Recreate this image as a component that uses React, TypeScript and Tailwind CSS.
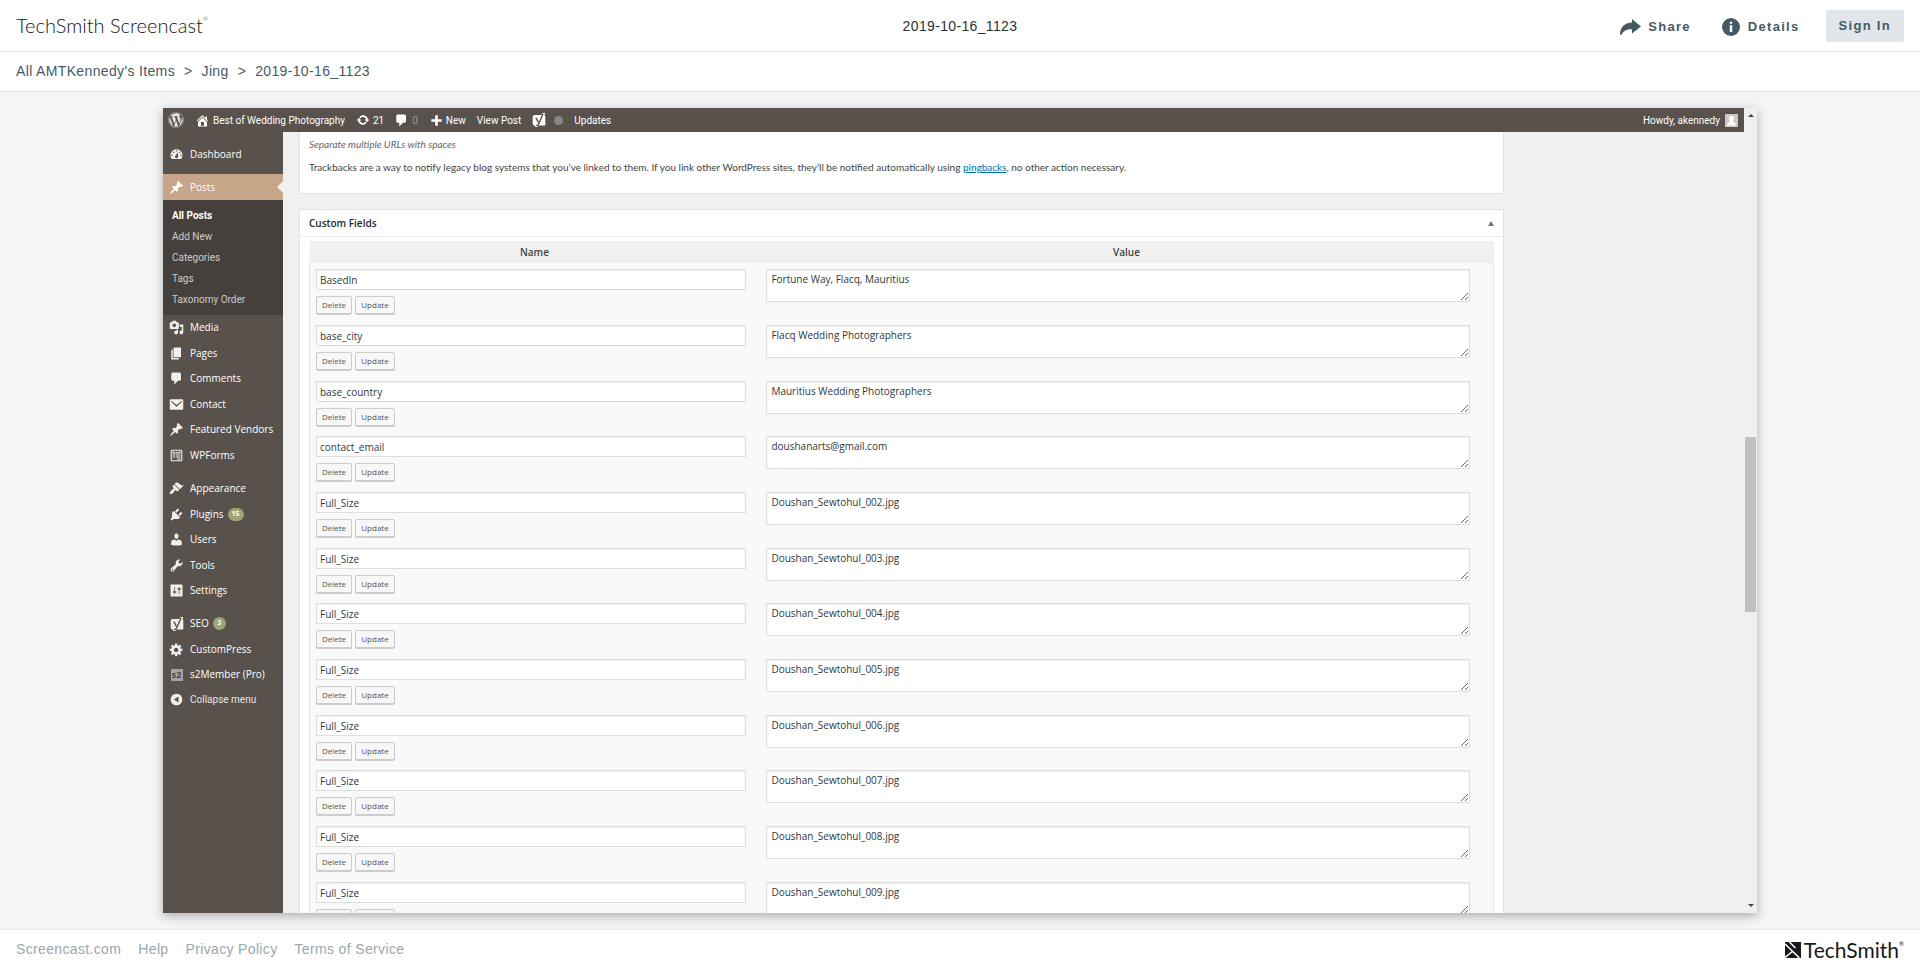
import type { ReactNode } from "react";
import { FaWordpress } from "react-icons/fa";

const icons = {
  dashboard:
    "M3.76 16h12.48c1.1-1.37 1.76-3.11 1.76-5 0-4.42-3.58-8-8-8s-8 3.58-8 8c0 1.89.66 3.63 1.76 5zM10 4c.55 0 1 .45 1 1s-.45 1-1 1-1-.45-1-1 .45-1 1-1zM6 6c.55 0 1 .45 1 1s-.45 1-1 1-1-.45-1-1 .45-1 1-1zm8 0c.55 0 1 .45 1 1s-.45 1-1 1-1-.45-1-1 .45-1 1-1zm-5.37 5.55L12 7v6c0 1.1-.9 2-2 2s-2-.9-2-2c0-.57.24-1.08.63-1.45zM4 10c.55 0 1 .45 1 1s-.45 1-1 1-1-.45-1-1 .45-1 1-1zm12 0c.55 0 1 .45 1 1s-.45 1-1 1-1-.45-1-1 .45-1 1-1z",
  pin: "M10.44 3.02l1.82-1.82 6.36 6.35-1.83 1.82c-1.05-.68-2.48-.57-3.41.36l-.75.75c-.92.93-1.04 2.35-.35 3.41l-1.83 1.82-2.41-2.41-2.8 2.79c-.42.42-3.38 2.71-3.8 2.29s1.86-3.39 2.28-3.81l2.79-2.79L4.1 9.36l1.83-1.82c1.05.69 2.48.57 3.4-.36l.75-.75c.93-.92 1.05-2.35.36-3.41z",
  media:
    "M13 11V4c0-.55-.45-1-1-1h-1.67L9 1H5L3.67 3H2c-.55 0-1 .45-1 1v7c0 .55.45 1 1 1h10c.55 0 1-.45 1-1zM7 4.5c1.38 0 2.5 1.12 2.5 2.5S8.38 9.5 7 9.5 4.5 8.38 4.5 7 5.62 4.5 7 4.5zM14 6h5v10.5c0 1.38-1.12 2.5-2.5 2.5S14 17.88 14 16.5s1.12-2.5 2.5-2.5c.17 0 .34.02.5.05V9h-3V6zm-4 8.05V13h2v3.5c0 1.38-1.12 2.5-2.5 2.5S7 17.88 7 16.5 8.12 14 9.5 14c.17 0 .34.02.5.05z",
  page: "M6 15V2h10v13H6zm-1 1h8v2H3V5h2v11z",
  comment: "M5 2h9c1.1 0 2 .9 2 2v7c0 1.1-.9 2-2 2h-2l-5 5v-5H5c-1.1 0-2-.9-2-2V4c0-1.1.9-2 2-2z",
  mail: "M2.5 3h15c.8 0 1.5.7 1.5 1.5v11c0 .8-.7 1.5-1.5 1.5h-15c-.8 0-1.500-.7-1.500-1.500v-11C1 3.700 1.700 3 2.500 3zM3 5v1.600l7 6.400 7-6.400V5l-7 5.500z",
  form: "M3 1h14c1.100 0 2 .9 2 2v14c0 1.100-.9 2-2 2H3c-1.100 0-2-.9-2-2V3c0-1.100.9-2 2-2zM2.700 2.700v14.600h14.600V2.700zM4 4l2 0 2 2 2-2 2 2 2-2h2v3H4zM4 8.500h4V10H4zm5 0h7V10H9zM4 11.500h4V13H4zm5 0h7V13H9zM11 14.500h5V16h-5z",
  brush:
    "M14.48 11.06L7.41 3.99l1.5-1.5c.5-.56 2.3-.47 3.51.32 1.21.8 1.43 1.28 2.91 2.1 1.18.64 2.45 1.26 4.45.85zm-.71.71L6.7 4.7 4.93 6.47c-.39.39-.39 1.02 0 1.41l1.06 1.06c.39.39.39 1.03 0 1.42-.6.6-1.43 1.11-2.21 1.69-.35.26-.7.53-1.01.84C1.43 14.23.4 16.08 1.4 17.07c.99 1 2.84-.03 4.18-1.36.31-.31.58-.66.85-1.02.57-.78 1.08-1.61 1.69-2.21.39-.39 1.02-.39 1.41 0l1.06 1.06c.39.39 1.02.39 1.41 0z",
  plug: "M13.11 4.36L9.87 7.6 8 5.73l3.24-3.24c.35-.34 1.05-.2 1.56.32.52.51.66 1.21.31 1.55zm-8 1.77l.91-1.12 9.01 9.01-1.19.84c-.71.71-2.63 1.16-3.82 1.16H6.14L4.9 17.26c-.59.59-1.54.59-2.12 0-.59-.58-.59-1.53 0-2.12l1.24-1.24v-3.88c0-1.13.4-3.19 1.09-3.89zm7.26 3.97l3.24-3.24c.34-.35 1.04-.21 1.55.31.52.51.66 1.21.31 1.55l-3.24 3.25z",
  user: "M10 9.25c-2.27 0-2.73-3.44-2.73-3.44C7 4.02 7.82 2 9.97 2c2.16 0 2.98 2.02 2.71 3.81 0 0-.41 3.44-2.68 3.44zm0 2.57L12.72 10c2.39 0 4.52 2.33 4.52 4.53v2.49s-3.65 1.13-7.24 1.13c-3.65 0-7.24-1.13-7.24-1.13v-2.49c0-2.25 1.94-4.48 4.47-4.48z",
  wrench:
    "M16.68 9.77c-1.34 1.34-3.3 1.67-4.95.99l-5.41 6.52c-.99.99-2.59.99-3.58 0s-.99-2.59 0-3.57l6.52-5.42c-.68-1.65-.35-3.61.99-4.95 1.28-1.28 3.12-1.62 4.72-1.06l-2.89 2.89 2.82 2.82 2.86-2.87c.53 1.58.18 3.39-1.08 4.65zM3.81 16.21c.4.39 1.04.39 1.43 0 .4-.4.4-1.04 0-1.43-.39-.4-1.03-.4-1.43 0-.39.39-.39 1.03 0 1.43z",
  sliders:
    "M18 17V3c0-.55-.45-1-1-1H3c-.55 0-1 .45-1 1v14c0 .55.45 1 1 1h14c.55 0 1-.45 1-1zM8 11h1c.55 0 1 .45 1 1s-.45 1-1 1H8v1.500c0 .28-.22.5-.5.5s-.5-.22-.5-.5V13H6c-.55 0-1-.45-1-1s.45-1 1-1h1V5.500c0-.28.22-.5.5-.5s.5.22.5.5V11zm5-2h-1c-.55 0-1-.45-1-1s.45-1 1-1h1V5.500c0-.28.22-.5.5-.5s.5.22.5.5V7h1c.55 0 1 .45 1 1s-.45 1-1 1h-1v5.500c0 .28-.22.5-.5.5s-.5-.22-.5-.5V9z",
  gear: "M18 12h-2.180c-.17.7-.44 1.350-.81 1.930l1.540 1.540-2.100 2.100-1.540-1.540c-.58.36-1.230.63-1.910.79V19H8v-2.180c-.68-.16-1.330-.43-1.910-.79l-1.540 1.540-2.120-2.120 1.540-1.540c-.36-.58-.63-1.230-.79-1.910H1V9.030h2.170c.16-.7.44-1.350.8-1.940L2.430 5.550l2.100-2.100 1.540 1.540c.58-.37 1.240-.64 1.930-.81V2h3v2.180c.68.16 1.330.43 1.910.79l1.540-1.540 2.120 2.120-1.540 1.540c.36.59.64 1.240.8 1.940H18V12zm-8.500 1.500c1.660 0 3-1.340 3-3s-1.340-3-3-3-3 1.340-3 3 1.340 3 3 3z",
  collapse: "M10 1a9 9 0 1 1 0 18 9 9 0 0 1 0-18zM13 5.500L6 10l7 4.500z",
  home: "M16 8.500l1.530 1.530-1.060 1.060L10 4.600l-6.470 6.490-1.060-1.060L10 2.500l4 4v-2h2v4zm-6-2.460l6 5.990V18H4v-5.970zM12 17v-5H8v5h4z",
  refresh:
    "M10.2 3.28c3.53 0 6.43 2.61 6.92 6h2.08l-3.5 4-3.5-4h2.32c-.45-1.97-2.21-3.45-4.32-3.45-1.45 0-2.73.71-3.54 1.78L4.95 5.66C6.23 4.2 8.11 3.28 10.2 3.28zm-.4 13.44c-3.52 0-6.43-2.61-6.92-6H.8l3.5-4c1.17 1.33 2.33 2.67 3.5 4H5.48c.45 1.97 2.21 3.45 4.32 3.45 1.45 0 2.73-.71 3.54-1.78l1.71 1.95c-1.28 1.46-3.15 2.38-5.25 2.38z",
  plus: "M8 2h4v6h6v4h-6v6H8v-6H2V8h6z",
};

type IconName = keyof typeof icons;

function Icon({ name, className = "size-[15px]" }: { name: IconName; className?: string }) {
  return (
    <svg viewBox="0 0 20 20" fill="currentColor" fillRule="evenodd" aria-hidden="true" className={`shrink-0 ${className}`}>
      <path d={icons[name]} />
    </svg>
  );
}

function YoastIcon() {
  return (
    <svg viewBox="0 0 20 20" aria-hidden="true" className="size-[14px] shrink-0">
      <path fill="currentColor" d="M4 3h9.500L14.700 0h4.300l-1.200 3.200c.9.400 1.200 1 1.200 1.800v13H9l-1.200 2H4.500v-2H4c-1.700 0-3-1.300-3-3V6c0-1.700 1.300-3 3-3z" />
      <path fill="none" stroke="#59524c" strokeWidth="2" d="M5.500 6.500l3.700 7M15.800 1l-6 14.500c-.7 1.600-1.500 2.500-3.800 2.600" />
    </svg>
  );
}

function MemberIcon() {
  return (
    <span aria-hidden="true" className="flex size-3 items-center justify-center bg-[#a5a3a1] text-[9px] leading-none font-bold text-[#4b4641]">
      s2
    </span>
  );
}

type MenuEntry = { label: string; icon: ReactNode; count?: number };

const contentMenu: MenuEntry[] = [
  { label: "Media", icon: <Icon name="media" /> },
  { label: "Pages", icon: <Icon name="page" /> },
  { label: "Comments", icon: <Icon name="comment" /> },
  { label: "Contact", icon: <Icon name="mail" /> },
  { label: "Featured Vendors", icon: <Icon name="pin" /> },
  { label: "WPForms", icon: <Icon name="form" className="size-[13px]" /> },
];

const siteMenu: MenuEntry[] = [
  { label: "Appearance", icon: <Icon name="brush" /> },
  { label: "Plugins", icon: <Icon name="plug" />, count: 15 },
  { label: "Users", icon: <Icon name="user" /> },
  { label: "Tools", icon: <Icon name="wrench" /> },
  { label: "Settings", icon: <Icon name="sliders" /> },
];

const extraMenu: MenuEntry[] = [
  { label: "SEO", icon: <YoastIcon />, count: 3 },
  { label: "CustomPress", icon: <Icon name="gear" /> },
  { label: "s2Member (Pro)", icon: <MemberIcon /> },
];

const postLinks = ["Add New", "Categories", "Tags", "Taxonomy Order"];

const fields = [
  { name: "BasedIn", value: "Fortune Way, Flacq, Mauritius" },
  { name: "base_city", value: "Flacq Wedding Photographers" },
  { name: "base_country", value: "Mauritius Wedding Photographers" },
  { name: "contact_email", value: "doushanarts@gmail.com" },
  { name: "Full_Size", value: "Doushan_Sewtohul_002.jpg" },
  { name: "Full_Size", value: "Doushan_Sewtohul_003.jpg" },
  { name: "Full_Size", value: "Doushan_Sewtohul_004.jpg" },
  { name: "Full_Size", value: "Doushan_Sewtohul_005.jpg" },
  { name: "Full_Size", value: "Doushan_Sewtohul_006.jpg" },
  { name: "Full_Size", value: "Doushan_Sewtohul_007.jpg" },
  { name: "Full_Size", value: "Doushan_Sewtohul_008.jpg" },
  { name: "Full_Size", value: "Doushan_Sewtohul_009.jpg" },
];

function MenuGroup({ entries, children }: { entries: MenuEntry[]; children?: ReactNode }) {
  return (
    <ul className="mb-2">
      {entries.map((entry) => (
        <li key={entry.label} className="h-[25px] even:h-[26px]">
          <a href="#" className="flex h-full items-center whitespace-nowrap">
            <span className="flex w-[27px] shrink-0 justify-center text-[#f1efee]">{entry.icon}</span>
            {entry.label}
            {entry.count !== undefined && (
              <span className="ml-1 flex h-[13px] min-w-[13px] items-center justify-center rounded-full bg-[#9ea476] px-1 text-[7px] font-bold">
                {entry.count}
              </span>
            )}
          </a>
        </li>
      ))}
      {children}
    </ul>
  );
}

function Sidebar() {
  return (
    <nav aria-label="Admin menu" className="w-[120px] shrink-0 bg-[#59524c] pt-[10px] text-[10px] text-white">
      <a href="#" className="flex h-6 items-center">
        <span className="flex w-[27px] justify-center text-[#f1efee]">
          <Icon name="dashboard" />
        </span>
        Dashboard
      </a>
      <a href="#" className="relative mt-2 flex h-[26px] items-center bg-[#c7a589]">
        <span className="flex w-[27px] justify-center">
          <Icon name="pin" />
        </span>
        Posts
        <svg viewBox="0 0 6 12" aria-hidden="true" className="absolute top-[7px] right-0 h-3 w-[6px] text-[#f0f0f0]">
          <path d="M6 0v12L0 6z" fill="currentColor" />
        </svg>
      </a>
      <ul className="bg-[#46403c] pt-[5px] pb-[5px] pl-[9px] font-[Roboto,sans-serif] text-[#cdcbc9]">
        <li className="flex h-[21px] items-center font-bold text-white">
          <a href="#">All Posts</a>
        </li>
        {postLinks.map((label) => (
          <li key={label} className="flex h-[21px] items-center">
            <a href="#">{label}</a>
          </li>
        ))}
      </ul>
      <MenuGroup entries={contentMenu} />
      <MenuGroup entries={siteMenu} />
      <MenuGroup entries={extraMenu}>
        <li>
          <button type="button" className="flex h-[25px] items-center font-[Roboto,sans-serif] text-[#e6e4e2]">
            <span className="flex w-[27px] justify-center text-[#f1efee]">
              <Icon name="collapse" className="size-[13px]" />
            </span>
            Collapse menu
          </button>
        </li>
      </MenuGroup>
    </nav>
  );
}

function AdminBar() {
  return (
    <div className="flex h-6 shrink-0 items-center bg-[#59524c] pr-[6px] pl-[5px] font-[Roboto,sans-serif] text-[10px] whitespace-nowrap text-white">
      <a href="#" aria-label="About WordPress">
        <FaWordpress className="size-4 text-[#e8e6e4]" />
      </a>
      <a href="#" className="ml-[11px] flex items-center gap-[3px]">
        <Icon name="home" />
        Best of Wedding Photography
      </a>
      <a href="#" className="ml-[11px] flex items-center gap-[3px]">
        <Icon name="refresh" className="size-[14px]" />
        21
      </a>
      <a href="#" className="ml-[10px] flex items-center gap-[3px] text-[#a09b97]">
        <Icon name="comment" className="size-[15px] text-white" />
        0
      </a>
      <a href="#" className="ml-3 flex items-center gap-[3px]">
        <Icon name="plus" className="size-[13px]" />
        New
      </a>
      <a href="#" className="ml-[11px]">
        View Post
      </a>
      <a href="#" aria-label="SEO" className="ml-[11px] flex items-center gap-2">
        <YoastIcon />
        <span className="size-[9px] rounded-full bg-[#888888]" />
      </a>
      <a href="#" className="ml-[11px]">
        Updates
      </a>
      <a href="#" className="ml-auto flex items-center gap-[5px]">
        Howdy, akennedy
        <svg viewBox="0 0 13 13" aria-hidden="true" className="size-[13px]">
          <path fill="#c9c9c9" d="M0 0h13v13H0z" />
          <path fill="#fff" d="M6.500 1.800c1.700 0 2.700 1.300 2.500 3-.1 1.200-.6 2-1.100 2.500.1.800 2.900 1.200 3.200 4.200H1.900c.3-3 3.100-3.400 3.200-4.200-.5-.5-1-1.300-1.100-2.500-.2-1.700.8-3 2.500-3z" />
        </svg>
      </a>
    </div>
  );
}

function FieldRow({ name, value, index }: { name: string; value: string; index: number }) {
  return (
    <tr className="h-14 align-top nth-[3n]:h-[55px]">
      <td className="pt-[6px] pr-[13px] pl-[6px]">
        <input
          aria-label={`Name ${index + 1}`}
          defaultValue={name}
          className="block h-[21px] w-full border border-[#dddddd] bg-white px-[3px] text-[10px] text-[#32373c] shadow-[inset_0_1px_2px_rgba(0,0,0,0.07)]"
        />
        <div className="mt-[6px] flex gap-[3px]">
          <button type="button" className="h-[18px] w-9 rounded-[2px] border border-[#cccccc] bg-[#f7f7f7] text-[8px] leading-none text-[#555555] shadow-[0_1px_0_#cccccc]">
            Delete
          </button>
          <button type="button" className="h-[18px] w-10 rounded-[2px] border border-[#cccccc] bg-[#f7f7f7] text-[8px] leading-none text-[#555555] shadow-[0_1px_0_#cccccc]">
            Update
          </button>
        </div>
      </td>
      <td className="pt-[6px] pr-[23px] pl-[7px]">
        <textarea
          aria-label={`Value ${index + 1}`}
          defaultValue={value}
          className="block h-[33px] w-full resize-y overflow-hidden border border-[#dddddd] bg-white px-1 py-[2px] text-[10px] leading-[14px] text-[#32373c] shadow-[inset_0_1px_2px_rgba(0,0,0,0.07)]"
        />
      </td>
    </tr>
  );
}

function Editor() {
  return (
    <div className="min-w-0 flex-1 overflow-hidden pr-[240px] pl-4 text-[10px] text-[#444444]">
      <section className="border border-t-0 border-[#e2e2e2] bg-white px-[9px] pt-[5px] pb-[18px] font-[Lato,sans-serif]">
        <p className="leading-[15px] text-[#666666] italic">Separate multiple URLs with spaces</p>
        <p className="mt-2 leading-[15px]">
          Trackbacks are a way to notify legacy blog systems that you&rsquo;ve linked to them. If you link other WordPress
          sites, they&rsquo;ll be notified automatically using{" "}
          <a href="#" className="text-[#0073aa] underline">
            pingbacks
          </a>
          , no other action necessary.
        </p>
      </section>
      <section className="mt-[15px] border border-[#e2e2e2] bg-white">
        <header className="flex h-[27px] items-center justify-between border-b border-[#eeeeee] px-[9px]">
          <h2 className="font-semibold text-[#23282d]">Custom Fields</h2>
          <button type="button" aria-label="Toggle panel">
            <svg viewBox="0 0 6 5" aria-hidden="true" className="h-[5px] w-[6px]">
              <path d="M3 0l3 5H0z" fill="#72777c" />
            </svg>
          </button>
        </header>
        <div className="px-[9px] pt-1">
          <table className="w-full table-fixed border-collapse bg-[#f9f9f9]">
            <thead>
              <tr className="h-[22px] bg-[#f0f0f0] leading-none">
                <th className="w-[38%] font-semibold">Name</th>
                <th className="font-semibold">Value</th>
              </tr>
            </thead>
            <tbody className="border-x border-[#e4e4e4]">
              {fields.map((field, index) => (
                <FieldRow key={field.value} index={index} {...field} />
              ))}
            </tbody>
          </table>
        </div>
      </section>
    </div>
  );
}

function ScrollTrack() {
  return (
    <div aria-hidden="true" className="flex w-[13px] shrink-0 flex-col items-center bg-[#f0f0f0] py-[6px]">
      <svg viewBox="0 0 6 3" className="h-[3px] w-[6px]">
        <path d="M3 0l3 3H0z" fill="#444" />
      </svg>
      <div className="grow-[320]" />
      <div className="h-[175px] w-[11px] bg-[#c1c1c1]" />
      <div className="grow-[292]" />
      <svg viewBox="0 0 6 3" className="h-[3px] w-[6px]">
        <path d="M3 3l3-3H0z" fill="#444" />
      </svg>
    </div>
  );
}

export default function App() {
  return (
    <div className="flex h-screen flex-col overflow-hidden bg-white font-['Liberation_Sans',Arial,sans-serif] text-[14px] text-[#455a64]">
      <header className="grid h-[52px] shrink-0 grid-cols-[1fr_auto_1fr] items-center border-b border-[#e2e6eb] px-4 pt-[2px]">
        <a href="#" className="flex items-start pb-1 font-[Lato,sans-serif] text-[20px] leading-6 font-light text-[#111719]">
          TechSmith Screencast
          <span className="text-[6px] leading-3">&reg;</span>
        </a>
        <h1 className="tracking-wide text-[#2a3236]">2019-10-16_1123</h1>
        <div className="flex items-center justify-end text-[13px] font-bold tracking-widest">
          <button type="button" className="flex items-center gap-[7px]">
            <svg viewBox="0 0 21 16" fill="currentColor" aria-hidden="true" className="h-4 w-[21px]">
              <path d="M12 0l9 7.500-9 7v-4.200C7.500 10 4 11.200 1.200 15.900c-.8.100-1.200-.3-1.200-1C.3 8.500 4.500 3.900 12 3.600z" />
            </svg>
            Share
          </button>
          <button type="button" className="ml-[31px] flex items-center gap-2">
            <svg viewBox="0 0 18 18" aria-hidden="true" className="size-[18px]">
              <circle cx="9" cy="9" r="9" fill="currentColor" />
              <path fill="#fff" d="M7.800 3.800h2.400v2H7.800zM7.800 7.200h2.400V14H7.800z" />
            </svg>
            Details
          </button>
          <a href="#" className="mb-[1px] ml-[26px] flex h-8 items-center rounded-[2px] bg-[#e2e6eb] px-[13px]">
            Sign In
          </a>
        </div>
      </header>
      <nav aria-label="Breadcrumb" className="flex h-10 shrink-0 items-center gap-[9px] border-b border-[#e2e6eb] px-4 tracking-wide">
        <a href="#">All AMTKennedy's Items</a>
        <span>&gt;</span>
        <a href="#">Jing</a>
        <span>&gt;</span>
        <a href="#">2019-10-16_1123</a>
      </nav>
      <main className="flex min-h-0 flex-1 justify-center bg-[#f4f5f7] p-4">
        <div className="flex w-full max-w-[1594px] overflow-hidden bg-[#f0f0f0] font-['Open_Sans',sans-serif] shadow-[0_3px_10px_rgba(0,0,0,0.3)]">
          <div className="flex min-w-0 flex-1 flex-col">
            <AdminBar />
            <div className="flex min-h-0 flex-1">
              <Sidebar />
              <Editor />
            </div>
          </div>
          <ScrollTrack />
        </div>
      </main>
      <footer className="flex h-10 shrink-0 items-center justify-between border-t border-[#e2eaf0] px-4 tracking-wide text-[#9aa7ad]">
        <nav aria-label="Footer" className="flex gap-[17px]">
          <a href="#">Screencast.com</a>
          <a href="#">Help</a>
          <a href="#">Privacy Policy</a>
          <a href="#">Terms of Service</a>
        </nav>
        <a href="#" className="flex items-center gap-[3px] font-[Lato,sans-serif] text-[21px] tracking-normal text-[#14191c]">
          <svg viewBox="0 0 16 16" aria-hidden="true" className="size-4">
            <path fill="currentColor" d="M0 0h16v16H0z" />
            <path stroke="#fff" strokeWidth="1.500" d="M0 2l14.500 14M0 15.500L8 9M4.500 0l6 6" fill="none" />
          </svg>
          <span className="flex items-start leading-6">
            TechSmith
            <span className="text-[6px] leading-3">&reg;</span>
          </span>
        </a>
      </footer>
    </div>
  );
}
